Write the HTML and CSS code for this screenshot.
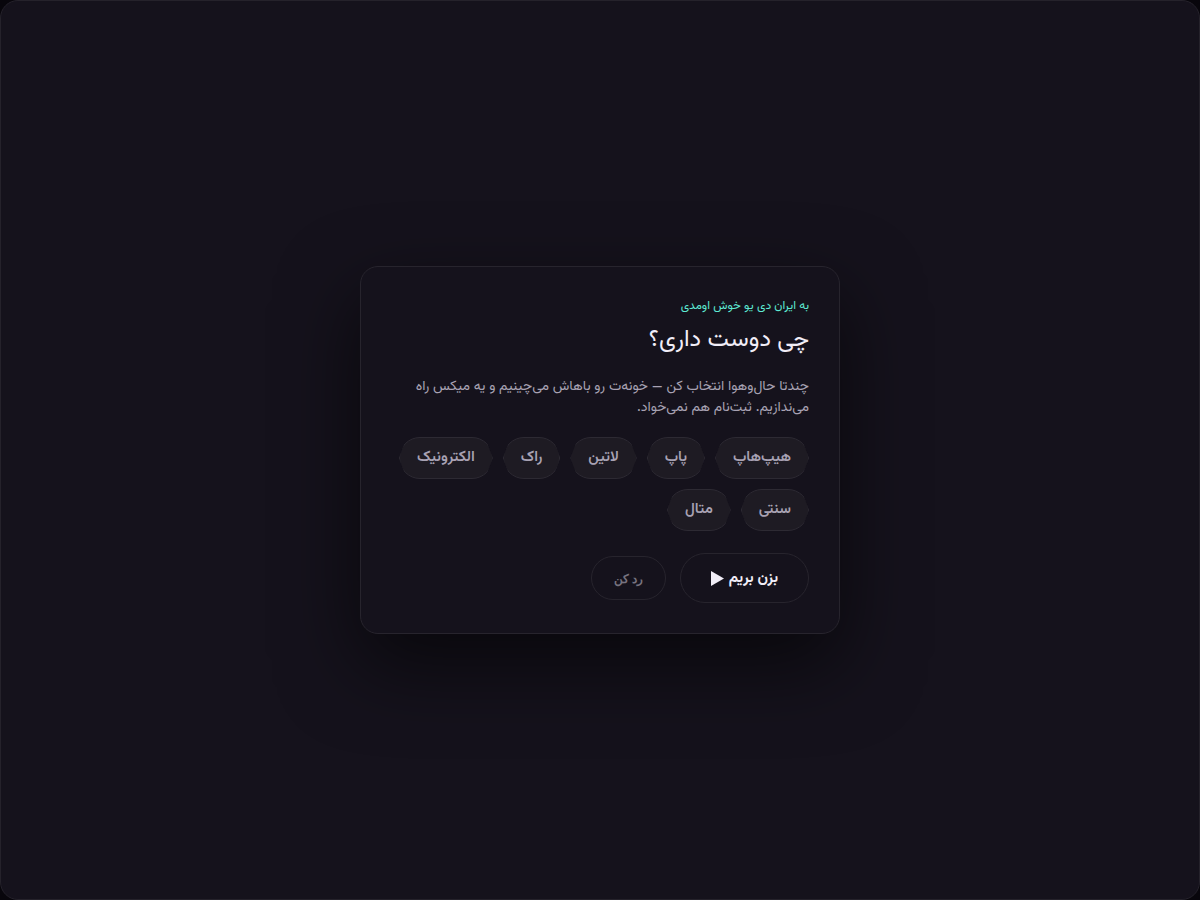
FILE: index.html
```html
<!DOCTYPE html>
<html lang="fa" dir="rtl">
<head>
  <meta charset="UTF-8">
  <meta name="viewport" content="width=device-width, initial-scale=1">
  <title>چی دوست داری؟</title>
  <link rel="stylesheet" href="styles.css">
</head>
<body>
  <main class="screen">
    <section class="card">
      <p class="eyebrow">به ایران دی یو خوش اومدی</p>
      <h1>چی دوست داری؟</h1>
      <p class="lead">چندتا حال‌وهوا انتخاب کن — خونه‌ت رو باهاش می‌چینیم و یه میکس راه می‌ندازیم. ثبت‌نام هم نمی‌خواد.</p>
      <div class="chips">
        <button type="button" class="chip">هیپ‌هاپ</button>
        <button type="button" class="chip">پاپ</button>
        <button type="button" class="chip">لاتین</button>
        <button type="button" class="chip">راک</button>
        <button type="button" class="chip">الکترونیک</button>
        <button type="button" class="chip">سنتی</button>
        <button type="button" class="chip">متال</button>
      </div>
      <div class="actions">
        <button type="button" class="go">
          بزن بریم
          <svg width="13" height="15" viewBox="0 0 13 15" aria-hidden="true"><path d="M0 0L13 7.5L0 15Z" fill="currentColor"/></svg>
        </button>
        <button type="button" class="skip">رد کن</button>
      </div>
    </section>
  </main>
</body>
</html>
```
FILE: styles.css
```css
* {
  box-sizing: border-box;
}
body {
  margin: 0;
  background: #08060c;
  color: #f1edf7;
  font-family: Vazirmatn, Inter, "DejaVu Sans", sans-serif;
}
.screen {
  display: flex;
  align-items: center;
  justify-content: center;
  min-height: 100vh;
  padding: 20px;
  background: #15121c;
  border: 1px solid #25222b;
  border-radius: 18px;
}
.card {
  width: 100%;
  max-width: 480px;
  padding: 30px;
  background: #15121c;
  border: 1px solid #27242d;
  border-radius: 18px;
  box-shadow: 0 30px 80px rgba(0, 0, 0, 0.6);
}
.eyebrow {
  margin: 0 0 6px;
  color: #5eead4;
  font-size: 12px;
  line-height: 18px;
}
h1 {
  margin: 0 0 18px;
  font-size: 24px;
  font-weight: 400;
  line-height: 38px;
}
.lead {
  margin: 0 0 18px;
  color: #a8a2b3;
  font-size: 14px;
  line-height: 21px;
}
.chips {
  display: flex;
  flex-wrap: wrap;
  gap: 10px;
  margin-bottom: 22px;
}
button {
  font-family: inherit;
  cursor: pointer;
}
.chip {
  height: 42px;
  padding: 0 17px 2px;
  background: #1e1b23;
  border: 1px solid #2d2a33;
  border-radius: 21px;
  clip-path: polygon(8px 0, calc(100% - 8px) 0, 100% 50%, calc(100% - 8px) 100%, 8px 100%, 0 50%);
  color: #a8a2b3;
  font-size: 15px;
  font-weight: 600;
}
.actions {
  display: flex;
  align-items: center;
  gap: 14px;
}
.go {
  display: flex;
  align-items: center;
  gap: 5px;
  height: 50px;
  padding: 0 30px;
  background: transparent;
  border: 1px solid #27242d;
  border-radius: 25px;
  color: #f1edf7;
  font-size: 15px;
  font-weight: 700;
}
.skip {
  height: 44px;
  padding: 0 22px;
  background: transparent;
  border: 1px solid #27242d;
  border-radius: 22px;
  color: #77727f;
  font-family: Lato, sans-serif;
  font-size: 12px;
  font-weight: 600;
}
```
